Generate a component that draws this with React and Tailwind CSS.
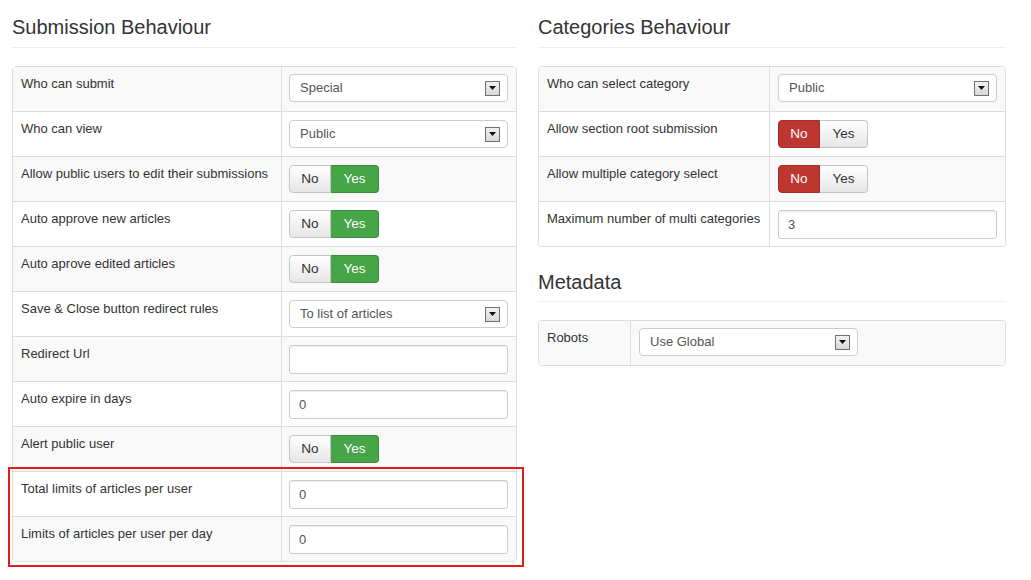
import React from "react";

const font = { fontFamily: '"Liberation Sans", Arial, sans-serif' };

const SelectBox = ({ value, width = "w-[219px]" }) => (
  <div className={`${width} h-[28px] border border-[#cccccc] rounded-[4px] bg-white flex items-center justify-between pl-[10px] pr-[7px]`}>
    <span className="text-[13px] text-[#555555]">{value}</span>
    <span className="w-[15px] h-[15px] border border-[#707070] bg-gradient-to-b from-[#f2f2f2] to-[#d8d8d8] flex items-center justify-center">
      <svg width="7" height="4" viewBox="0 0 7 4">
        <path d="M0 0h7L3.5 4z" fill="#111" />
      </svg>
    </span>
  </div>
);

const TextInput = ({ value }) => (
  <div className="w-[219px] h-[29px] border border-[#cccccc] rounded-[3px] bg-white flex items-center pl-[9px] shadow-[inset_0_1px_1px_rgba(0,0,0,0.075)]">
    <span className="text-[13px] text-[#555555]">{value}</span>
  </div>
);

const Toggle = ({ value }) => {
  const yes = value === "yes";
  return (
    <div className="flex h-[28px] text-[13.5px]">
      <span
        className={`w-[42px] flex items-center justify-center rounded-l-[4px] border ${
          yes
            ? "border-[#c5c5c5] bg-gradient-to-b from-white to-[#e6e6e6] text-[#333333]"
            : "border-[#a82c27] bg-[#bd362f] text-white"
        }`}
      >
        No
      </span>
      <span
        className={`w-[48px] flex items-center justify-center rounded-r-[4px] border border-l-0 ${
          yes
            ? "border-[#3d8b3d] bg-[#46a546] text-white"
            : "border-[#c5c5c5] bg-gradient-to-b from-white to-[#e6e6e6] text-[#333333]"
        }`}
      >
        Yes
      </span>
    </div>
  );
};

const Control = ({ c }) => {
  if (c.type === "select") return <SelectBox value={c.value} />;
  if (c.type === "toggle") return <Toggle value={c.value} />;
  return <TextInput value={c.value} />;
};

// first row has no top border, so it is one pixel shorter
const Row = ({ label, c, index, labelWidth, pad = "pl-[8px]" }) => (
  <div
    className={`grid ${labelWidth} ${index > 0 ? "h-[45px] border-t border-[#dddddd]" : "h-[44px]"} ${
      index % 2 === 0 ? "bg-[#f9f9f9]" : "bg-white"
    }`}
  >
    <div className="pl-[8px] pt-[8px] text-[13px] leading-[18px] text-[#333333] border-r border-[#dddddd]">
      {label}
    </div>
    <div className={`${pad} ${index > 0 ? "pt-[8px]" : "pt-[7px]"}`}>
      <Control c={c} />
    </div>
  </div>
);

const Heading = ({ children }) => (
  <div className="border-b border-[#eeeeee] pb-[7px] mb-[18px]">
    <h2 className="text-[20px] leading-[26px] text-[#333333] pt-[14px]">{children}</h2>
  </div>
);

const submission = [
  ["Who can submit", { type: "select", value: "Special" }],
  ["Who can view", { type: "select", value: "Public" }],
  ["Allow public users to edit their submissions", { type: "toggle", value: "yes" }],
  ["Auto approve new articles", { type: "toggle", value: "yes" }],
  ["Auto aprove edited articles", { type: "toggle", value: "yes" }],
  ["Save & Close button redirect rules", { type: "select", value: "To list of articles" }],
  ["Redirect Url", { type: "input", value: "" }],
  ["Auto expire in days", { type: "input", value: "0" }],
  ["Alert public user", { type: "toggle", value: "yes" }],
];

const limits = [
  ["Total limits of articles per user", { type: "input", value: "0" }],
  ["Limits of articles per user per day", { type: "input", value: "0" }],
];

const categories = [
  ["Who can select category", { type: "select", value: "Public" }],
  ["Allow section root submission", { type: "toggle", value: "no" }],
  ["Allow multiple category select", { type: "toggle", value: "no" }],
  ["Maximum number of multi categories", { type: "input", value: "3" }],
];

export default function App() {
  return (
    <div className="w-[1031px] h-[580px] bg-white flex gap-[21px] pl-[12px]" style={font}>
      <div className="w-[505px]">
        <Heading>Submission Behaviour</Heading>
        <div className="relative border border-[#dddddd] rounded-[4px]">
          {submission.map(([label, c], i) => (
            <Row key={label} label={label} c={c} index={i} labelWidth="grid-cols-[269px_1fr]" pad="pl-[7px]" />
          ))}
          <div className="relative">
            {limits.map(([label, c], i) => (
              <Row
                key={label}
                label={label}
                c={c}
                index={submission.length + i}
                labelWidth="grid-cols-[269px_1fr]"
                pad="pl-[7px]"
              />
            ))}
            <div className="absolute -left-[5px] -right-[8px] -top-[4px] -bottom-[6px] border-2 border-[#e31b1b] pointer-events-none" />
          </div>
        </div>
      </div>

      <div className="w-[468px]">
        <Heading>Categories Behaviour</Heading>
        <div className="border border-[#dddddd] rounded-[4px] overflow-hidden">
          {categories.map(([label, c], i) => (
            <Row key={label} label={label} c={c} index={i} labelWidth="grid-cols-[231px_1fr]" />
          ))}
        </div>
        <div className="mt-[8px]">
          <div className="border-b border-[#eeeeee] pb-[6px] mb-[18px]">
            <h2 className="text-[20px] leading-[26px] text-[#333333] pt-[14px]">Metadata</h2>
          </div>
        </div>
        <div className="border border-[#dddddd] rounded-[4px] overflow-hidden">
          <Row label="Robots" c={{ type: "select", value: "Use Global" }} index={0} labelWidth="grid-cols-[92px_1fr]" />
        </div>
      </div>
    </div>
  );
}
